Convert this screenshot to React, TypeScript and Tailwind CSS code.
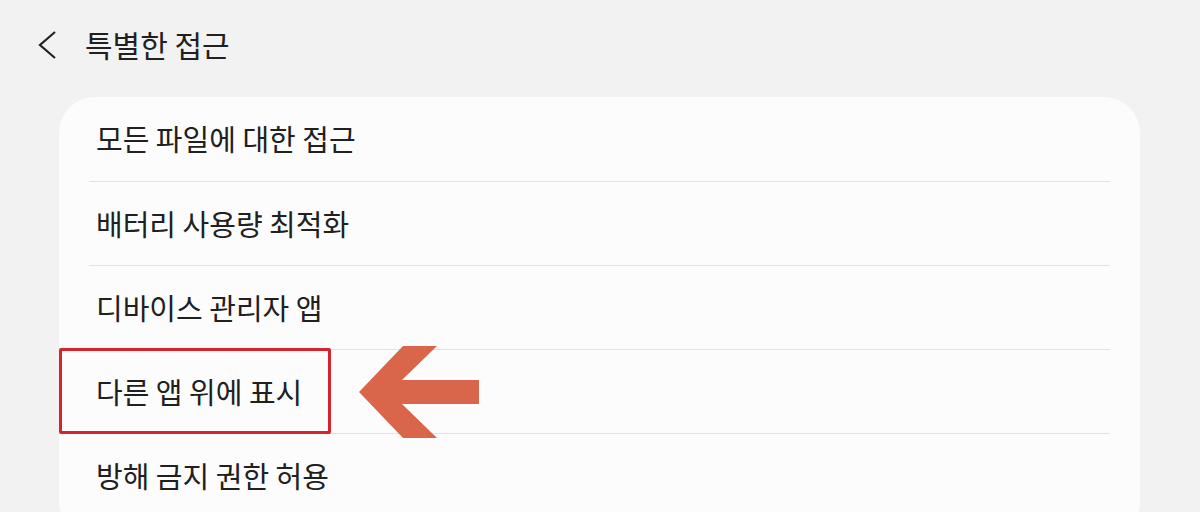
import React from "react";

const items = [
  "모든 파일에 대한 접근",
  "배터리 사용량 최적화",
  "디바이스 관리자 앱",
  "다른 앱 위에 표시",
  "방해 금지 권한 허용",
];

export default function App() {
  return (
    <div
      className="w-[1200px] h-[512px] overflow-hidden bg-[#f2f2f2] text-[#202020]"
      style={{ fontFamily: '"Noto Sans CJK KR", "Noto Sans", sans-serif' }}
    >
      <div className="h-[97px] flex items-start pt-[22px]">
        <div className="w-[85px] flex justify-start pl-[36px] pt-[8px]">
          <svg width="22" height="30" viewBox="0 0 22 30">
            <polyline points="19,2 4,15 19,28" fill="none" stroke="#222" strokeWidth="2.2" strokeLinejoin="miter" />
          </svg>
        </div>
        <div className="text-[30px] leading-[44px]">특별한 접근</div>
      </div>
      <div className="relative ml-[59px] w-[1081px] h-[440px] rounded-[36px] bg-[#fcfcfc]">
        {items.map((t, i) => (
          <div key={t}>
            {i > 0 && <div className="mx-[30px] h-px bg-[#e2e2e2]" />}
            <div className={`${i === 0 ? "h-[84px]" : "h-[83px]"} flex items-center pl-[37px] text-[29px]`}>
              {t}
            </div>
          </div>
        ))}
        <div className="absolute left-0 top-[251px] w-[272px] h-[86px] border-[3px] border-[#d8232f] rounded-[2px]" />
        <svg className="absolute left-[300px] top-[248px]" width="124" height="94" viewBox="360 345 124 94">
          <polygon
            points="360,392 404,346 438,346 403,380 480,380 480,404 403,404 438,438 404,438"
            fill="#d9664a"
          />
        </svg>
      </div>
    </div>
  );
}
